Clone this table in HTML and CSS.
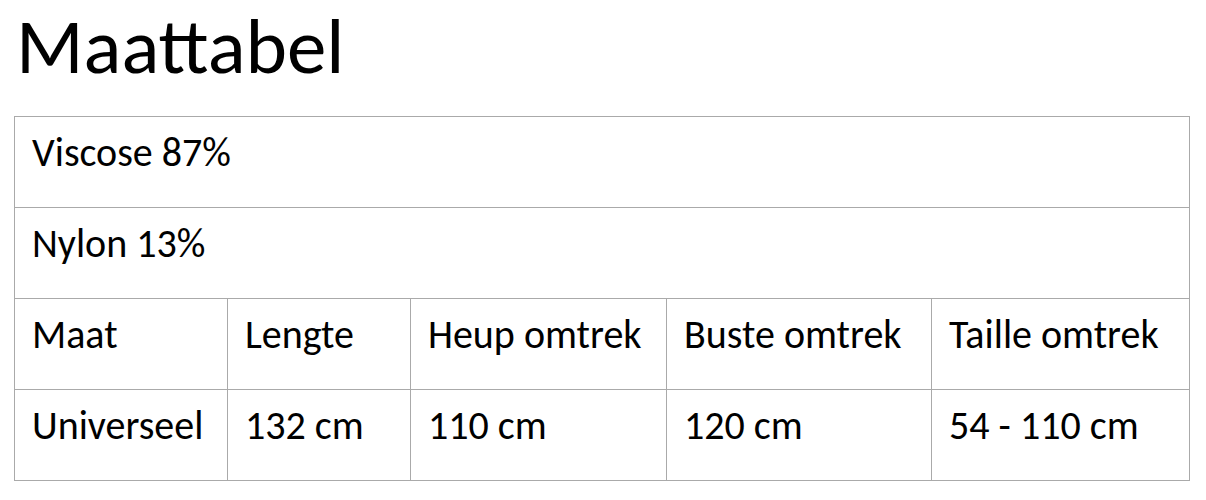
FILE: index.html
```html
<!DOCTYPE html>
<html lang="nl">
<head>
<meta charset="utf-8">
<title>Maattabel</title>
<link rel="stylesheet" href="styles.css">
</head>
<body>
<main class="page">
  <h1 class="title">Maattabel</h1>
  <table class="size-table">
    <colgroup>
      <col class="c1"><col class="c2"><col class="c3"><col class="c4"><col class="c5">
    </colgroup>
    <tbody>
      <tr><td colspan="5">Viscose 87%</td></tr>
      <tr><td colspan="5">Nylon 13%</td></tr>
      <tr><td>Maat</td><td>Lengte</td><td>Heup omtrek</td><td>Buste omtrek</td><td>Taille omtrek</td></tr>
      <tr><td>Universeel</td><td>132 cm</td><td>110 cm</td><td>120 cm</td><td>54 - 110 cm</td></tr>
    </tbody>
  </table>
</main>
</body>
</html>
```
FILE: styles.css
```css
html, body {
  margin: 0;
  padding: 0;
  background: #ffffff;
}
body {
  font-family: Carlito, Lato, "Open Sans", sans-serif;
  color: #000000;
}
.page {
  padding: 0 0 0 14px;
}
.title {
  margin: 0;
  padding: 7px 0 0 2px;
  height: 116px;
  box-sizing: border-box;
  font-size: 79px;
  font-weight: normal;
  line-height: 1;
}
.size-table {
  border-collapse: collapse;
  table-layout: fixed;
  width: 1175px;
}
.c1 { width: 213px; }
.c2 { width: 183px; }
.c3 { width: 256px; }
.c4 { width: 265px; }
.c5 { width: 258px; }
.size-table td {
  border: 1px solid #aaaaaa;
  height: 91px;
  box-sizing: border-box;
  padding: 12px 0 0 17px;
  vertical-align: top;
  font-size: 40px;
  line-height: 1.2;
  white-space: nowrap;
  overflow: hidden;
}
```
